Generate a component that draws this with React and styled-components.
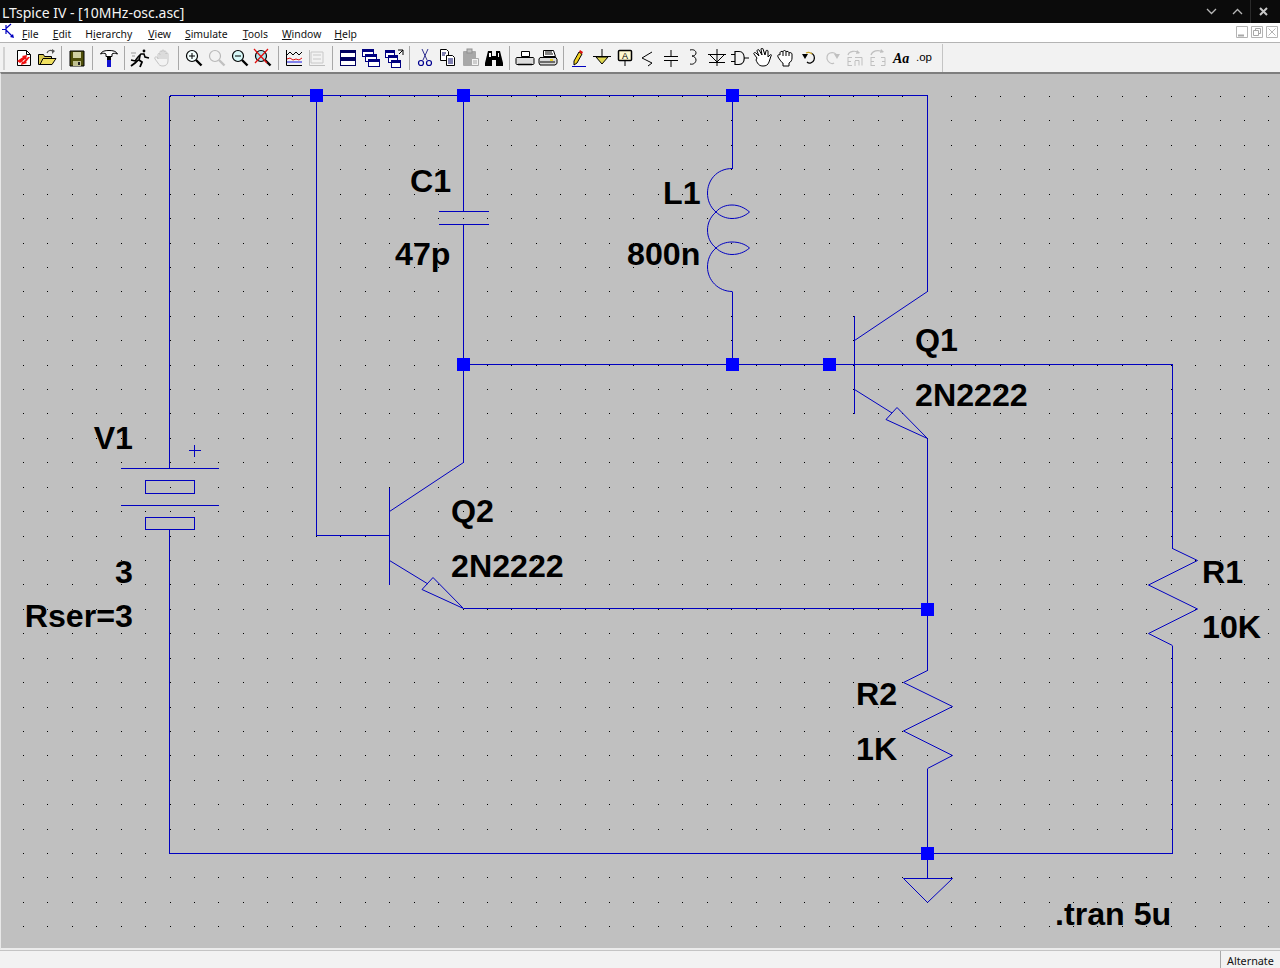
import React from 'react'
import styled, { createGlobalStyle } from 'styled-components'

const GlobalStyle = createGlobalStyle`
    html, body {
        margin: 0;
        padding: 0;
        background: #f2f2f2;
        overflow: hidden;
    }
`

const Window = styled.div`
    width: 1280px;
    height: 968px;
    display: flex;
    flex-direction: column;
    font-family: 'Noto Sans', sans-serif;
    overflow: hidden;
`

const TitleBar = styled.div`
    height: 23px;
    flex: none;
    display: flex;
    align-items: center;
    background: #0b0b0b;
    color: #f4f4f4;
    font-size: 14px;
    padding: 0 4px 0 2px;
`

const Title = styled.span`
    flex: 1;
    white-space: nowrap;
    padding-top: 2px;
`

const WinButton = styled.div`
    width: 26px;
    height: 23px;
    display: flex;
    align-items: center;
    justify-content: center;
    border-left: ${p => (p.$divided ? '1px solid #2a2a2a' : 'none')};
    box-sizing: border-box;
`

const MenuBar = styled.div`
    height: 20px;
    flex: none;
    display: flex;
    align-items: center;
    background: #ffffff;
    border-bottom: 1px solid #b4b4b4;
    padding-left: 22px;
    position: relative;
    box-sizing: border-box;
`

const MenuItem = styled.span`
    font-size: 10.4px;
    color: #111;
    margin-right: ${p => p.$gap}px;
    padding-top: 2px;
    white-space: nowrap;

    u {
        text-underline-offset: 1px;
    }
`

const AppGlyph = styled.svg`
    position: absolute;
    left: 1px;
    top: 0;
`

const MdiButtons = styled.div`
    position: absolute;
    right: 2px;
    top: 3px;
    display: flex;
    gap: 3px;
`

const MdiButton = styled.svg`
    display: block;
`

const Toolbar = styled.div`
    height: 29px;
    flex: none;
    display: flex;
    align-items: center;
    background: #f2f2f2;
    padding: 1px 0 0 3px;
    box-sizing: border-box;
`

const Grip = styled.div`
    width: 2px;
    height: 23px;
    background: #d2d2d2;
    margin-right: 7px;
`

const Tool = styled.div`
    width: 23px;
    height: 24px;
    flex: none;
    display: flex;
    align-items: center;
    justify-content: center;
`

const Sep = styled.div`
    width: ${p => p.$w}px;
    height: 24px;
    flex: none;
    display: flex;
    justify-content: center;

    &::after {
        content: '';
        width: 1px;
        height: 100%;
        background: #a8a8a8;
    }
`

const ToolbarEnd = styled.div`
    width: 1px;
    height: 29px;
    background: #c4c4c4;
    margin-left: 7px;
`

const Canvas = styled.div`
    flex: 1;
    min-height: 0;
    background: #c0c0c0;
    border-top: 2px solid #7e7e7e;
    border-left: 1px solid #e8e8e8;
    border-bottom: 2px solid #ececec;
    overflow: hidden;
`

const Sheet = styled.svg`
    display: block;
    margin-left: -1px;
`

const Dot = styled.rect`
    fill: #000;
`

const Wire = styled.path`
    fill: none;
    stroke: #0000c0;
    stroke-width: 1;
    shape-rendering: ${p => (p.$smooth ? 'auto' : 'crispEdges')};
`

const Junction = styled.rect`
    fill: #0000ff;
`

const Label = styled.text`
    font-family: 'Liberation Sans', Arial, sans-serif;
    font-size: 32.2px;
    font-weight: 700;
    fill: #000;
`

const StatusBar = styled.div`
    height: 18px;
    flex: none;
    display: flex;
    justify-content: flex-end;
    background: #f2f2f2;
    border-top: 1px solid #c4c4c4;
    box-sizing: border-box;
`

const StatusCell = styled.div`
    width: 60px;
    border-left: 1px solid #a8a8a8;
    font-size: 10.8px;
    color: #111;
    padding: 2px 0 0 6px;
    box-sizing: border-box;
    white-space: nowrap;
    line-height: 16px;
`

const IconText = styled.text`
    font-family: ${p => p.$serif ? "'Liberation Serif', serif" : "'Liberation Sans', sans-serif"};
    font-size: ${p => p.$size}px;
    font-style: ${p => (p.$serif ? 'italic' : 'normal')};
    font-weight: ${p => (p.$serif ? 700 : 400)};
    fill: #000;
`

const Icon = ({ children }) => (
    <svg width="20" height="20" viewBox="0 0 20 20" fill="none">{children}</svg>
)

const Glass = ({ color = '#000', lens = '#fff', handle = '#000', children }) => (
    <>
        <circle cx="8" cy="8" r="5.5" stroke={color} strokeWidth="1.2" fill={lens} />
        <path d="M12 12l5.5 5.5" stroke={handle} strokeWidth="2.4" />
        {children}
    </>
)

const Plot = ({ dim }) => (
    <>
        <path d="M2.5 2v15.5H18" stroke={dim ? '#bdbdbd' : '#000'} />
        {dim ? (
            <path d="M4 4h12v11H4zM6 7h8M6 11h8" stroke="#c8c8c8" />
        ) : (
            <>
                <path d="M3 7l3-3 3 3 3-3 3 3 3-3" stroke="#000" />
                <path d="M3 11l3-1 3 2 3-1 3 1 3-2" stroke="#e01010" />
                <path d="M3 14h15" stroke="#1010e0" />
            </>
        )}
    </>
)

const Win = ({ x, y, w = 11, h = 7, fill = '#fff' }) => (
    <>
        <rect x={x + 0.5} y={y + 0.5} width={w} height={h} fill={fill} stroke="#000080" />
        <rect x={x + 0.5} y={y + 0.5} width={w} height="2" fill="#000080" stroke="#000080" />
    </>
)

const icons = {
    newFile: (
        <Icon>
            <path d="M3.500 2.500h9l4 4v11h-13z" fill="#fff" stroke="#000" />
            <path d="M12.500 2.500v4h4" stroke="#000" />
            <path d="M3 13l6-4-1-1 5-1-1 5-1-1-5 4zM16 9l-4 5 1 1-6 2 1-4 1 1 5-5z" fill="#f01010" />
        </Icon>
    ),
    open: (
        <Icon>
            <path d="M1.500 6.500h5l1 2h7v8h-13z" fill="#d8c850" stroke="#000" />
            <path d="M3 16.500l3-6h13l-4 6z" fill="#f0e060" stroke="#000" />
            <path d="M10 5c1-3 4-3 6-2" stroke="#555" strokeWidth="1.200" />
            <path d="M15 1l3 2-3 3z" fill="#555" />
        </Icon>
    ),
    save: (
        <Icon>
            <path d="M3 3h14v15H3z" fill="#50500a" stroke="#000" />
            <rect x="6" y="4" width="8" height="6" fill="#d0d0a0" />
            <rect x="6" y="13" width="8" height="5" fill="#c0c090" />
            <rect x="11" y="14" width="2" height="3" fill="#222" />
        </Icon>
    ),
    hammer: (
        <Icon>
            <path d="M1.500 6C3 3 6 2.500 10 2.500S17 3 18.500 6C16 5 14 5 13 6v2.500H7V6C6 5 4 5 1.500 6z" fill="#fff" stroke="#000" />
            <rect x="8" y="9" width="4" height="3" fill="#000" />
            <rect x="8" y="12" width="4" height="7" fill="#1010d0" />
        </Icon>
    ),
    run: (
        <Icon>
            <path d="M1 12l4 1 3-4 3-3h3l1 3 4 1" stroke="#000" strokeWidth="1.500" />
            <circle cx="14" cy="3" r="1.400" fill="#000" />
            <path d="M10 7l-1 5 3 2-2 5M8 12l-3 3-4 3" stroke="#000" strokeWidth="1.800" />
            <path d="M1 5h5M2 8h3" stroke="#999" />
        </Icon>
    ),
    hand: (
        <Icon>
            <path d="M5 11V6.500c0-1.500 2-1.500 2 0V4c0-1.500 2-1.500 2 0V3c0-1.500 2-1.500 2 0v1c0-1.500 2-1.500 2 0v2c0-1.500 2-1.500 2 0v7c0 3-2 5-5 5s-4-1-5-3l-3-4c-1-2 1-3 3-1z" fill="#f2f2f2" stroke="#c4c4c4" />
            <path d="M7 6v5M9 4v7M11 4v7M13 5v6" stroke="#c4c4c4" />
        </Icon>
    ),
    zoomIn: (
        <Icon><Glass lens="#f4ffff"><path d="M5 8h6M8 5v6" stroke="#000" /></Glass></Icon>
    ),
    zoomDim: (
        <Icon><Glass color="#b8b8b8" lens="#f2f2f2" handle="#c0c0c0" /></Icon>
    ),
    zoomOut: (
        <Icon><Glass lens="#d8f8f8"><path d="M5 8h6" stroke="#000" /></Glass></Icon>
    ),
    zoomFit: (
        <Icon>
            <Glass lens="#b0e8f0" />
            <path d="M1 1l13 14M15 1L2 15" stroke="#e01010" strokeWidth="1.300" />
        </Icon>
    ),
    plot: <Icon><Plot /></Icon>,
    plotDim: <Icon><Plot dim /></Icon>,
    tile: (
        <Icon>
            <rect x="2.500" y="2.500" width="15" height="7" fill="#fff" stroke="#000060" />
            <rect x="2.500" y="2.500" width="15" height="2" fill="#000060" stroke="#000060" />
            <rect x="2.500" y="10.500" width="15" height="7" fill="#fff" stroke="#000060" />
            <rect x="2.500" y="10.500" width="15" height="2" fill="#000060" stroke="#000060" />
        </Icon>
    ),
    cascade: (
        <Icon><Win x={1} y={1} /><Win x={4} y={6} /><Win x={7} y={11} /></Icon>
    ),
    arrange: (
        <Icon>
            <Win x={1} y={2} w={9} /><Win x={4} y={7} w={9} /><Win x={7} y={12} w={9} />
            <path d="M19 7V2h-5" stroke="#000" /><path d="M19 2l-4 4" stroke="#000" />
        </Icon>
    ),
    cut: (
        <Icon>
            <path d="M7 1l5 11M13 1L8 12" stroke="#303090" />
            <circle cx="6" cy="15" r="2.500" stroke="#000090" strokeWidth="1.200" />
            <circle cx="14" cy="15" r="2.500" stroke="#000090" strokeWidth="1.200" />
        </Icon>
    ),
    copy: (
        <Icon>
            <path d="M2.500 1.500h6l2 2v9h-8z" fill="#fff" stroke="#000" />
            <path d="M8.500 7.500h6l2 2v8h-8z" fill="#fff" stroke="#000" />
            <path d="M4 5h4M4 7h3M10 11h5M10 13h5M10 15h5" stroke="#000060" />
        </Icon>
    ),
    paste: (
        <Icon>
            <rect x="2" y="3" width="13" height="15" rx="1" fill="#a8a8a8" />
            <rect x="6" y="1" width="5" height="4" fill="#c0c0c0" stroke="#909090" />
            <path d="M10.500 10.500h7v7h-7z" fill="#f4f4f4" stroke="#a8a8a8" />
            <path d="M12 13h4M12 15h4" stroke="#a8a8a8" />
        </Icon>
    ),
    find: (
        <Icon>
            <path d="M4 3h4v5h4V3h4l3 12v3h-7v-6H8v6H1v-3z" fill="#000" />
            <path d="M5 5h2v4H5zM14 5h1v4h-1z" fill="#fff" />
        </Icon>
    ),
    preview: (
        <Icon>
            <path d="M6.500 3.500h8v5h-8z" fill="#fff" stroke="#000" />
            <path d="M2 9.500h16c1 0 1 1 1 1v5c0 1-1 1-1 1H2s-1 0-1-1v-5s0-1 1-1z" fill="#dcdcdc" stroke="#000" />
            <path d="M3 16.500h14" stroke="#000" strokeWidth="1.500" />
        </Icon>
    ),
    print: (
        <Icon>
            <path d="M5.500 2.500h10l2 6h-12z" fill="#fff" stroke="#000" />
            <path d="M7 4h7M7 6h8" stroke="#000" />
            <path d="M2 9.500h16l1 2v4l-2 1.500H2l-1-2v-4z" fill="#d8d8d8" stroke="#000" />
            <rect x="12" y="11" width="3" height="2" fill="#e8d030" />
            <path d="M2 14h15" stroke="#000" />
        </Icon>
    ),
    pencil: (
        <Icon>
            <path d="M5 13l5-9 3 2-5 9-3 2z" fill="#f0d020" stroke="#000" />
            <path d="M10 4l1-2 3 2-1 2z" fill="#e01010" />
            <path d="M3 18.500h14" stroke="#0000c0" />
        </Icon>
    ),
    ground: (
        <Icon>
            <path d="M10 1v7M1 8.500h18" stroke="#000" />
            <path d="M4 9l6 7 6-7z" fill="#e0d850" stroke="#000" />
        </Icon>
    ),
    label: (
        <Icon>
            <rect x="3.500" y="2.500" width="13" height="10" rx="1" fill="#fff8d0" stroke="#000" strokeWidth="1.500" />
            <IconText x="10" y="11" $size="9" textAnchor="middle">A</IconText>
            <path d="M10 13v5" stroke="#000" />
        </Icon>
    ),
    resistor: (
        <Icon><path d="M14 4L4 10l10 5-4 3" stroke="#000" /></Icon>
    ),
    capacitor: (
        <Icon><path d="M10 2v6M3 8.500h14M3 12.500h14M10 13v6" stroke="#000" /></Icon>
    ),
    inductor: (
        <Icon><path d="M6 2c4-1 6 1 6 3s-2 3-4 3c2 0 4 2 4 4s-2 5-6 4" stroke="#000" /></Icon>
    ),
    diode: (
        <Icon><path d="M10 1v17M1 6.500h18M3 7l7 7 7-7M2 14.500h16" stroke="#000" /></Icon>
    ),
    component: (
        <Icon><path d="M1 6.500h4M1 13.500h4M14 10h5M5 3.500h4c7 0 7 13 0 13H5z" stroke="#000" strokeWidth="1.200" /></Icon>
    ),
    move: (
        <Icon>
            <path d="M4 10L1 6c-1-1 1-2 2-1l3 3-2-5c0-1 1-2 2-1l3 5-1-6c0-1 2-1 2 0l2 6 1-4c0-1 2-1 2 0v6l2-2c1-1 2 0 1 1l-2 6c-1 3-3 4-6 4s-5-1-7-6z" fill="#fff" stroke="#000" />
        </Icon>
    ),
    drag: (
        <Icon>
            <path d="M4 12L2 9c-1-2 1-3 2-2V5c0-2 3-2 3-1 0-2 3-2 3 0 0-1 3-1 3 1 1-1 3 0 3 1v4c0 2-1 4-3 5v3H7v-3c-1 0-2-2-3-3z" fill="#fff" stroke="#000" />
            <path d="M7 4v4M10 4v4M13 5v3" stroke="#000" />
        </Icon>
    ),
    undo: (
        <Icon>
            <path d="M8 14c2 2 6 1 7-2s0-6-3-7" stroke="#000" strokeWidth="1.200" />
            <path d="M7 5c2-1 4-1 6 1" stroke="#c8a020" strokeWidth="1.200" />
            <path d="M3 6h6l-3 5z" fill="#000" />
        </Icon>
    ),
    redo: (
        <Icon>
            <path d="M15 8c-1-3-4-4-7-3S4 10 6 13s5 3 6 2" stroke="#c0c0c0" strokeWidth="1.200" />
            <path d="M18 6h-6l3 5z" fill="#c0c0c0" />
        </Icon>
    ),
    rotate: (
        <Icon>
            <path d="M3 7c1-4 8-5 11-2" stroke="#c0c0c0" strokeWidth="1.200" />
            <path d="M12 2l3 3-4 1z" fill="#c0c0c0" />
            <path d="M3 9v9M3 9.500h4M3 13.500h3M3 17.500h4M10 9.500h7v8M10 12.500h4v5M10 13v5" stroke="#c0c0c0" />
        </Icon>
    ),
    mirror: (
        <Icon>
            <path d="M3 7c1-4 7-6 12-3" stroke="#c0c0c0" strokeWidth="1.200" />
            <path d="M13 1l3 3-4 1z" fill="#c0c0c0" />
            <path d="M3 9v9M3 9.500h4M3 13.500h3M3 17.500h4M13 9.500h4v8h-4M14 13.500h3" stroke="#c0c0c0" />
        </Icon>
    ),
    text: (
        <Icon>
            <IconText x="2" y="15" $size="14" $serif>Aa</IconText>
        </Icon>
    ),
    op: (
        <Icon>
            <IconText x="2" y="13" $size="11.500">.op</IconText>
        </Icon>
    ),
}

// widths of the gaps between toolbar groups, placed by position in the list
const toolbar = [
    'newFile', 'open', 7, 'save', 9, 'hammer', 8, 'run', 'hand', 8, 'zoomIn', 'zoomDim', 'zoomOut', 'zoomFit', 8,
    'plot', 'plotDim', 8, 'tile', 'cascade', 'arrange', 8, 'cut', 'copy', 'paste', 'find', 8, 'preview', 'print', 8,
    'pencil', 'ground', 'label', 'resistor', 'capacitor', 'inductor', 'diode', 'component', 'move', 'drag',
    'undo', 'redo', 'rotate', 'mirror', 'text', 'op',
]

const menus = [
    { pre: '', key: 'F', rest: 'ile', gap: 14 },
    { pre: '', key: 'E', rest: 'dit', gap: 14 },
    { pre: 'H', key: 'i', rest: 'erarchy', gap: 16 },
    { pre: '', key: 'V', rest: 'iew', gap: 14 },
    { pre: '', key: 'S', rest: 'imulate', gap: 15 },
    { pre: '', key: 'T', rest: 'ools', gap: 14 },
    { pre: '', key: 'W', rest: 'indow', gap: 13 },
    { pre: '', key: 'H', rest: 'elp', gap: 0 },
]

const wires = [
    'M169.500 95.500H927.500V291.500',
    'M169.500 95.500V468.500',
    'M169.500 529.500V853.500H1172.500V645.500',
    'M1172.500 548.500V364.500H463.500',
    'M316.500 95.500V535.500H389.500',
    'M463.500 95.500V211.500',
    'M463.500 224.500V462.500',
    'M732.500 95.500V168.500',
    'M732.500 291.500V364.500',
    'M927.500 438.500V670.500',
    'M927.500 768.500V878.500',
    'M463.500 608.500H927.500',
    'M438.500 211.500H488.500M438.500 224.500H488.500',
    'M120.500 468.500H218.500M120.500 505.500H218.500',
    'M145.500 480.500H194.500V493.500H145.500ZM145.500 517.500H194.500V529.500H145.500Z',
    'M188.500 450.500H200.500M194.500 444.500V456.500',
    'M854.500 315.500V413.500',
    'M389.500 487.500V584.500',
]

const slanted = [
    'M927.500 291.500L854.500 340.500',
    'M463.500 462.500L389.500 511.500',
    'M854.500 389.500L892 413',
    'M927.500 438.500L897 407.500L886 419.500Z',
    'M389.500 560.500L428 584',
    'M463.500 608.500L433 577.500L422 589.500Z',
    'M1172.500 548.500L1197.500 560.500L1148.500 585L1197.500 609L1148.500 633.500L1172.500 645.500',
    'M927.500 670.500L903.500 682.500L952.500 706.500L903.500 731L952.500 755.500L927.500 768.500',
    'M903.500 878.500H952.500L927.500 902.500Z',
    'M732.500 168.500C716 168.500 707.500 181 707.500 193C707.500 200 710 207 716 212C720 207 726 205 732 205C739 205 745 208 749.500 212C745 216 739 218.500 732 218.500C726 218.500 720 216 716 212C710 217 707.500 224 707.500 230C707.500 237 710 243 716 248C720 244 726 242 732 242C739 242 745 244 749.500 248C745 252 739 254.500 732 254.500C726 254.500 720 252 716 248C710 253 707.500 260 707.500 267C707.500 280 718 291.500 732.500 291.500',
]

const junctions = [
    [316, 95], [463, 95], [732, 95], [463, 364], [732, 364], [829, 364], [927, 609], [927, 853],
]

const labels = [
    { x: 133, y: 449, end: true, text: 'V1' },
    { x: 133, y: 583, end: true, text: '3' },
    { x: 133, y: 627, end: true, text: 'Rser=3' },
    { x: 410, y: 192, text: 'C1' },
    { x: 395, y: 265, text: '47p' },
    { x: 663, y: 204, text: 'L1' },
    { x: 627, y: 265, text: '800n' },
    { x: 915, y: 351, text: 'Q1' },
    { x: 915, y: 406, text: '2N2222' },
    { x: 451, y: 522, text: 'Q2' },
    { x: 451, y: 577, text: '2N2222' },
    { x: 856, y: 705, text: 'R2' },
    { x: 856, y: 760, text: '1K' },
    { x: 1202, y: 583, text: 'R1' },
    { x: 1202, y: 638, text: '10K' },
    { x: 1055, y: 925, text: '.tran 5u' },
]

const dots = []
for (let i = -7; i < 46; i++) {
    for (let j = -1; j < 35; j++) {
        dots.push([Math.round(169.5 + i * 24.42), Math.round(96 + j * 24.42)])
    }
}

const App = () => (
    <Window>
        <GlobalStyle />
        <TitleBar>
            <Title>LTspice IV - [10MHz-osc.asc]</Title>
            <WinButton>
                <svg width="11" height="7" viewBox="0 0 11 7" fill="none"><path d="M1 1l4.500 4.500L10 1" stroke="#b8b8b8" strokeWidth="1.300" /></svg>
            </WinButton>
            <WinButton>
                <svg width="11" height="7" viewBox="0 0 11 7" fill="none"><path d="M1 6l4.500-4.500L10 6" stroke="#b8b8b8" strokeWidth="1.300" /></svg>
            </WinButton>
            <WinButton $divided>
                <svg width="9" height="9" viewBox="0 0 9 9" fill="none"><path d="M1 1l7 7M8 1L1 8" stroke="#c8c8c8" strokeWidth="2" /></svg>
            </WinButton>
        </TitleBar>
        <MenuBar>
            <AppGlyph width="14" height="16" viewBox="0 0 14 16" fill="none">
                <path d="M10 1L5 5.500M1 6.500H5M5 2V11M5 7l6 6" stroke="#0000c0" strokeWidth="1.200" />
                <path d="M9 14l4 1-1-4z" fill="#0000c0" />
            </AppGlyph>
            {menus.map(m => (
                <MenuItem key={m.key + m.rest} $gap={m.gap}>{m.pre}<u>{m.key}</u>{m.rest}</MenuItem>
            ))}
            <MdiButtons>
                <MdiButton width="12" height="12" viewBox="0 0 12 12" fill="none">
                    <path d="M.5.500h11v11H.500z" stroke="#b4b4b4" /><path d="M2 9.500h6" stroke="#a8a8a8" strokeWidth="2" />
                </MdiButton>
                <MdiButton width="12" height="12" viewBox="0 0 12 12" fill="none">
                    <path d="M.5.500h11v11H.500z" stroke="#b4b4b4" /><path d="M2.500 4.500h5v5h-5zM4.500 4V2.500h5v5H8" stroke="#a8a8a8" />
                </MdiButton>
                <MdiButton width="12" height="12" viewBox="0 0 12 12" fill="none">
                    <path d="M.5.500h11v11H.500z" stroke="#b4b4b4" /><path d="M2.500 2.500l7 7M9.500 2.500l-7 7" stroke="#b4b4b4" />
                </MdiButton>
            </MdiButtons>
        </MenuBar>
        <Toolbar>
            <Grip />
            {toolbar.map((t, i) =>
                typeof t === 'number'
                    ? <Sep key={i} $w={t} />
                    : <Tool key={i}>{icons[t]}</Tool>
            )}
            <ToolbarEnd />
        </Toolbar>
        <Canvas>
            <Sheet width="1280" height="874" viewBox="0 74 1280 874">
                {dots.map(([x, y]) => <Dot key={x + '-' + y} x={x} y={y} width="1" height="1" />)}
                {wires.map(d => <Wire key={d} d={d} />)}
                {slanted.map(d => <Wire key={d} d={d} $smooth />)}
                {junctions.map(([x, y]) => <Junction key={x + '-' + y} x={x - 6} y={y - 6} width="13" height="13" />)}
                {labels.map(l => (
                    <Label key={l.x + '-' + l.y} x={l.x} y={l.y} textAnchor={l.end ? 'end' : 'start'}>{l.text}</Label>
                ))}
            </Sheet>
        </Canvas>
        <StatusBar>
            <StatusCell>Alternate</StatusCell>
        </StatusBar>
    </Window>
)

export default App
